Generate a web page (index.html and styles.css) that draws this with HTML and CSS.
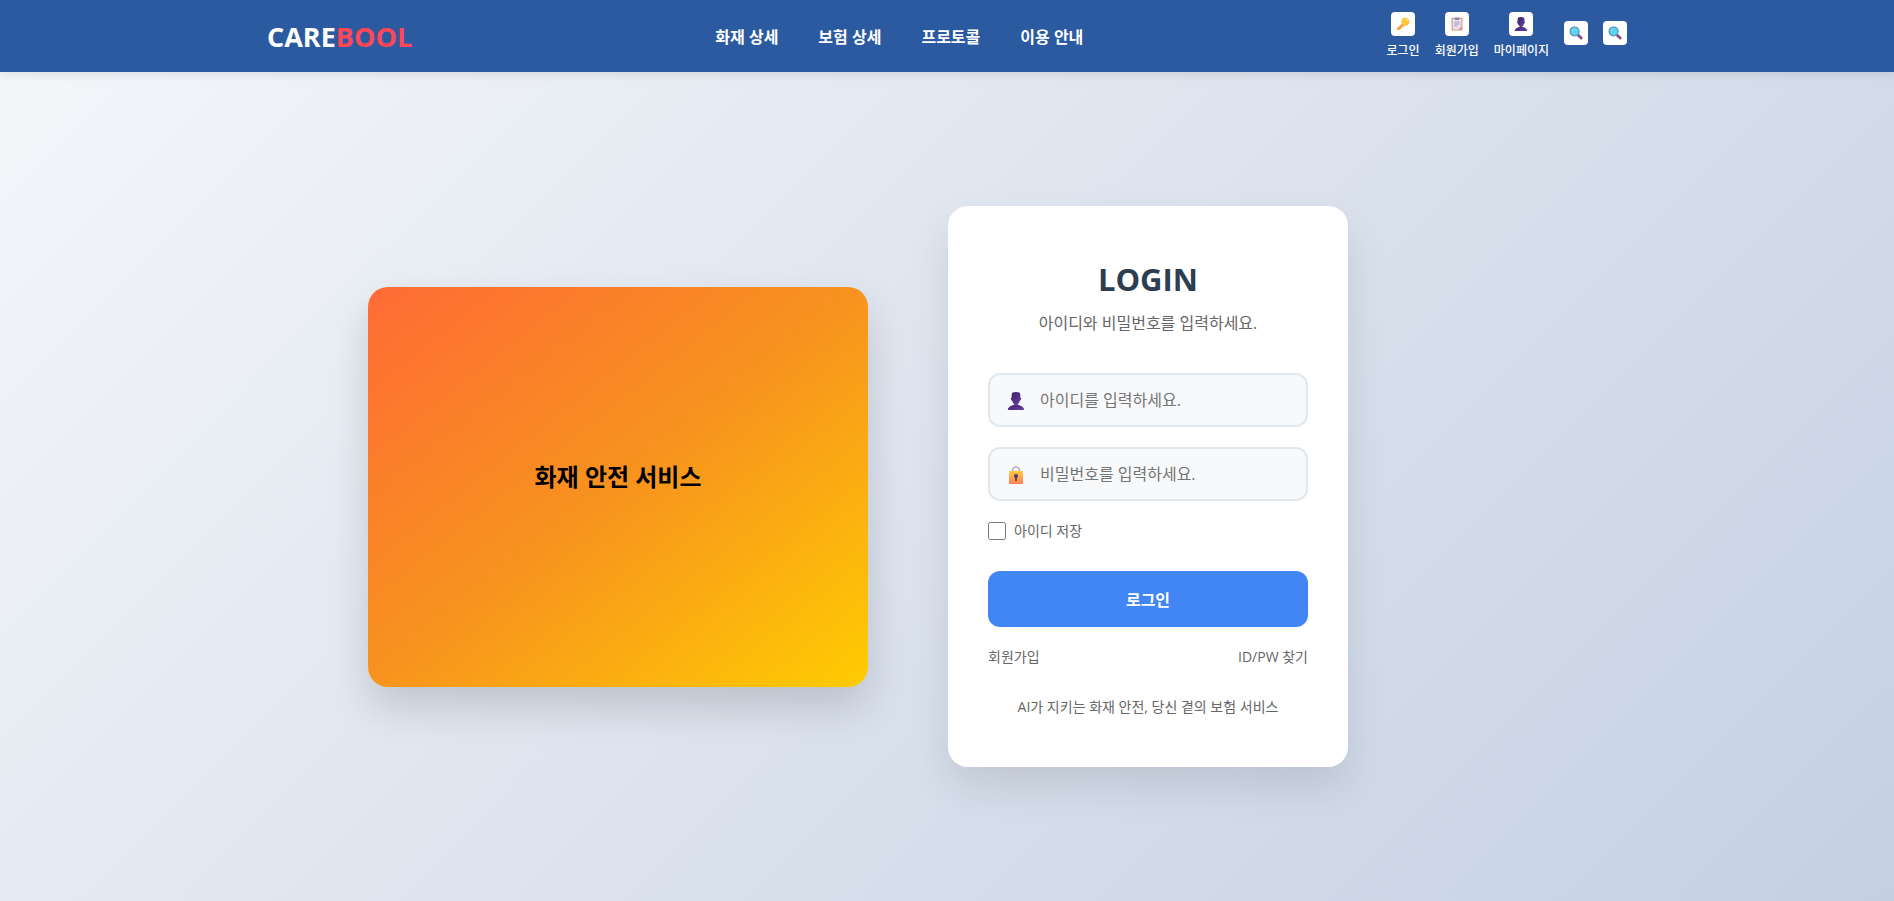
FILE: index.html
```html
<!DOCTYPE html>
<html lang="ko">
<head>
    <meta charset="UTF-8">
    <meta name="viewport" content="width=device-width, initial-scale=1.0">
    <title>CAREBOOL - 로그인</title>
    <link rel="stylesheet" href="styles.css">
</head>
<body>

    <!-- shared icons -->
    <svg class="icon-defs" aria-hidden="true">
        <defs>
            <linearGradient id="purple" x1="0" y1="0" x2="1" y2="1">
                <stop offset="0" stop-color="#3b2363"/>
                <stop offset="1" stop-color="#6a3fa5"/>
            </linearGradient>
            <linearGradient id="gold" x1="0" y1="0" x2="0" y2="1">
                <stop offset="0" stop-color="#ffc83d"/>
                <stop offset="1" stop-color="#ff8257"/>
            </linearGradient>
            <symbol id="icon-user" viewBox="0 0 18 18">
                <path d="M5.5 0.5Q9 -0.3 12.5 0.5L13.3 2v3.500l.8.4-.3 2-.8.5Q12 11.500 10.500 12.200v1h-3v-1Q6 11.500 5 8.400l-.8-.5-.3-2 .8-.4V2z" fill="url(#purple)"/>
                <path d="M0.8 18C1.200 14.800 4 14 7.300 12.600q1.700 1 3.400 0C14 14 16.800 14.800 17.200 18z" fill="url(#purple)"/>
            </symbol>
            <symbol id="icon-lock" viewBox="0 0 18 18">
                <path d="M5.500 6V4.500a3.500 3.500 0 0 1 7 0V6" fill="none" stroke="#b4acbc" stroke-width="1.6"/>
                <rect x="2" y="5" width="14" height="13" rx="1" fill="url(#gold)"/>
                <circle cx="9" cy="10" r="2" fill="#433b6b"/>
                <rect x="8.2" y="10" width="1.6" height="5" fill="#433b6b"/>
            </symbol>
            <symbol id="icon-key" viewBox="0 0 18 18">
                <path d="M9.500 7L1.500 14.300v2.500h3l1-1.400 1.500-.4.300-1.500 5-3.500z" fill="#ff9f38"/>
                <circle cx="12" cy="6" r="5" fill="#ffc533"/>
                <circle cx="14.2" cy="4" r="1.1" fill="#fff0c0"/>
            </symbol>
            <symbol id="icon-clipboard" viewBox="0 0 18 18">
                <rect x="2" y="1" width="14" height="16.5" rx="1" fill="#d99a80"/>
                <path d="M3.500 2.500h11V12L11 16H3.500z" fill="#e9e2f4"/>
                <rect x="6" y="0.5" width="6" height="3.5" rx="1" fill="#9189a3"/>
                <path d="M5.500 6.500h7M5.500 9h7M5.500 11.500h4" stroke="#9c93b5" stroke-width="1.2"/>
            </symbol>
            <symbol id="icon-search" viewBox="0 0 18 18">
                <path d="M11.500 11.500l4.200 4" stroke="#8d4a8f" stroke-width="3.6" stroke-linecap="round"/>
                <circle cx="7.2" cy="7" r="5.8" fill="#5bd3f5" stroke="#4a8bab" stroke-width="1.4"/>
                <path d="M4 6a3.500 3.500 0 0 1 2.500-2.500" fill="none" stroke="#b9f1ff" stroke-width="1"/>
            </symbol>
        </defs>
    </svg>

    <header class="header">
        <div class="header-container">
            <a href="#" class="logo">CARE<span>BOOL</span></a>
            <nav class="nav-menu">
                <a href="#">화재 상세</a>
                <a href="#">보험 상세</a>
                <a href="#">프로토콜</a>
                <a href="#">이용 안내</a>
            </nav>
            <div class="header-icons">
                <a href="#" class="icon-item">
                    <span class="icon-box"><svg><use href="#icon-key"/></svg></span>
                    <span>로그인</span>
                </a>
                <a href="#" class="icon-item">
                    <span class="icon-box"><svg><use href="#icon-clipboard"/></svg></span>
                    <span>회원가입</span>
                </a>
                <a href="#" class="icon-item">
                    <span class="icon-box"><svg><use href="#icon-user"/></svg></span>
                    <span>마이페이지</span>
                </a>
                <a href="#" class="icon-item" aria-label="검색">
                    <span class="icon-box"><svg><use href="#icon-search"/></svg></span>
                </a>
                <a href="#" class="icon-item" aria-label="전체 검색">
                    <span class="icon-box"><svg><use href="#icon-search"/></svg></span>
                </a>
            </div>
        </div>
    </header>

    <main class="main-content">
        <div class="login-container">
            <div class="service-image">화재 안전 서비스</div>

            <div class="login-card">
                <h1>LOGIN</h1>
                <p class="subtitle">아이디와 비밀번호를 입력하세요.</p>

                <form>
                    <div class="input-group">
                        <svg class="input-icon"><use href="#icon-user"/></svg>
                        <input type="text" id="user-id" placeholder="아이디를 입력하세요." aria-label="아이디">
                    </div>
                    <div class="input-group">
                        <svg class="input-icon"><use href="#icon-lock"/></svg>
                        <input type="password" id="user-pw" placeholder="비밀번호를 입력하세요." aria-label="비밀번호">
                    </div>
                    <div class="save-id">
                        <input type="checkbox" id="save-id">
                        <label for="save-id">아이디 저장</label>
                    </div>
                    <button type="submit" class="login-btn">로그인</button>
                </form>

                <div class="login-links">
                    <a href="#">회원가입</a>
                    <a href="#">ID/PW 찾기</a>
                </div>
                <p class="footer-text">AI가 지키는 화재 안전, 당신 곁의 보험 서비스</p>
            </div>
        </div>
    </main>

</body>
</html>
```
FILE: styles.css
```css
* {
    margin: 0;
    padding: 0;
    box-sizing: border-box;
}

body {
    font-family: "Open Sans", "Noto Sans CJK KR", sans-serif;
    background: linear-gradient(135deg, #f5f7fa 0%, #c3cfe2 100%);
    background-size: 100% calc(100vh + 72px);
    min-height: 100vh;
    display: flex;
    flex-direction: column;
}

a {
    text-decoration: none;
}

.icon-defs {
    position: absolute;
    width: 0;
    height: 0;
}

/* header */
.header {
    background: #2c5aa0;
    height: 72px;
    box-shadow: 0 2px 10px rgba(0, 0, 0, 0.1);
}

.header-container {
    max-width: 1400px;
    height: 100%;
    margin: 0 auto;
    padding: 0 20px;
    display: flex;
    justify-content: space-between;
    align-items: center;
}

.logo {
    font-size: 27px;
    font-weight: bold;
    color: white;
}

.logo span {
    color: #ff4757;
}

.nav-menu {
    display: flex;
    gap: 40px;
}

.nav-menu a {
    color: white;
    font-size: 16px;
    font-weight: 600;
}

.header-icons {
    display: flex;
    align-items: center;
    gap: 15px;
}

.icon-item {
    display: flex;
    flex-direction: column;
    align-items: center;
    color: white;
    font-size: 12px;
    font-weight: 500;
    line-height: 18px;
}

.icon-box {
    display: flex;
    align-items: center;
    justify-content: center;
    width: 24px;
    height: 24px;
    margin-bottom: 6px;
    background: white;
    border-radius: 4px;
}

.icon-box svg {
    width: 14px;
    height: 14px;
}

/* login */
.main-content {
    flex: 1;
    display: flex;
    align-items: center;
    justify-content: center;
}

.login-container {
    width: 100%;
    max-width: 1158px;
    display: flex;
    align-items: center;
    gap: 80px;
}

.service-image {
    width: 500px;
    height: 400px;
    padding-bottom: 22px;
    border-radius: 20px;
    background: linear-gradient(to bottom right, #ff6b35 0%, #f7931e 50%, #ffcc02 100%);
    box-shadow: 0 20px 40px rgba(0, 0, 0, 0.15);
    display: flex;
    align-items: center;
    justify-content: center;
    font-size: 24px;
    font-weight: bold;
}

.login-card {
    width: 400px;
    padding: 49px 40px 50px;
    background: white;
    border-radius: 20px;
    box-shadow: 0 20px 40px rgba(0, 0, 0, 0.1);
}

.login-card h1 {
    font-size: 31px;
    line-height: 48px;
    color: #2c3e50;
    text-align: center;
}

.subtitle {
    margin: 8px 0 38px;
    font-size: 16px;
    line-height: 24px;
    color: #666;
    text-align: center;
}

.input-group {
    position: relative;
    margin-bottom: 20px;
}

.input-group input {
    display: block;
    width: 100%;
    height: 54px;
    padding: 0 20px 0 50px;
    border: 2px solid #e1e8ed;
    border-radius: 12px;
    background: #f8f9fa;
    font-family: inherit;
    font-size: 16px;
}

.input-icon {
    position: absolute;
    left: 19px;
    top: 19px;
    width: 18px;
    height: 18px;
}

.save-id {
    display: flex;
    align-items: center;
    gap: 8px;
    margin-bottom: 30px;
}

.save-id input {
    width: 18px;
    height: 18px;
}

.save-id label {
    font-size: 14px;
    line-height: 20px;
    color: #666;
}

.login-btn {
    display: block;
    width: 100%;
    height: 56px;
    border: none;
    border-radius: 12px;
    background: #4285f4;
    color: white;
    font-family: inherit;
    font-size: 16px;
    font-weight: bold;
    cursor: pointer;
}

.login-links {
    display: flex;
    justify-content: space-between;
    margin: 20px 0 30px;
}

.login-links a,
.footer-text {
    font-size: 14px;
    line-height: 20px;
    color: #666;
}

.footer-text {
    text-align: center;
}
```
